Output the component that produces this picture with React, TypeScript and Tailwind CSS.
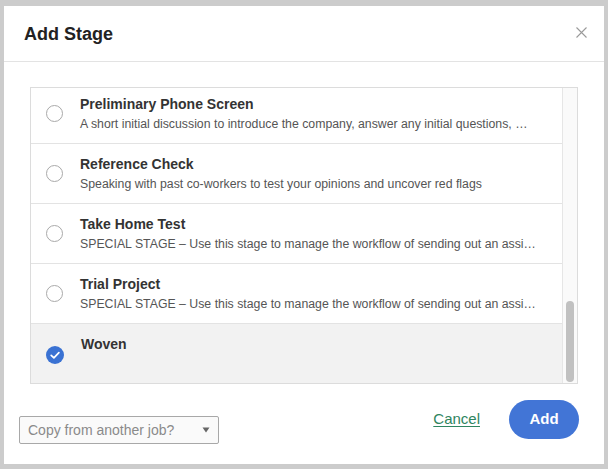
import React from "react";

const stages = [
  {
    title: "Preliminary Phone Screen",
    desc: "A short initial discussion to introduce the company, answer any initial questions, …",
  },
  {
    title: "Reference Check",
    desc: "Speaking with past co-workers to test your opinions and uncover red flags",
  },
  {
    title: "Take Home Test",
    desc: "SPECIAL STAGE – Use this stage to manage the workflow of sending out an assi…",
  },
  {
    title: "Trial Project",
    desc: "SPECIAL STAGE – Use this stage to manage the workflow of sending out an assi…",
  },
  { title: "Woven", desc: "", selected: true },
];

function Radio({ selected }: { selected?: boolean }) {
  if (selected) {
    return (
      <svg width="18" height="18" viewBox="0 0 18 18" className="shrink-0">
        <circle cx="9" cy="9" r="9" fill="#3a72d3" />
        <path d="M5.2 9.3 L7.9 11.8 L12.9 6.6" fill="none" stroke="#fff" strokeWidth="1.7" strokeLinecap="round" strokeLinejoin="round" />
      </svg>
    );
  }
  return <div className="w-[17px] h-[17px] shrink-0 rounded-full border border-[#a9a9a9] bg-white" />;
}

export default function App() {
  return (
    <div
      className="w-[608px] h-[469px] bg-[#cccccc] pt-[6px] pl-[4px] overflow-hidden"
      style={{ fontFamily: '"Liberation Sans", Arial, sans-serif' }}
    >
      <div className="w-[600px] h-[458px] bg-white flex flex-col">
        <div className="h-[56px] shrink-0 border-b border-[#e3e3e3] flex items-center justify-between pl-[20px] pr-[17px]">
          <h1 className="text-[18px] font-bold text-[#222] mt-[1px]">Add Stage</h1>
          <svg width="11" height="11" viewBox="0 0 11 11" className="mt-[-2px]">
            <path d="M0.5 0.5 L10.5 10.5 M10.5 0.5 L0.5 10.5" stroke="#9a9a9a" strokeWidth="1.1" />
          </svg>
        </div>
        <div className="pt-[25px] px-[26px]">
          <div className="h-[297px] border border-[#dcdcdc] flex overflow-hidden">
            <div className="flex-1 min-w-0 overflow-hidden">
              <div className="-mt-[4px]">
                {stages.map((s) => (
                  <div
                    key={s.title}
                    className={`h-[60px] flex items-center border-b border-[#e3e3e3] pl-[15px] ${
                      s.selected ? "bg-[#f2f2f2]" : "bg-white"
                    }`}
                  >
                    <div className={s.selected ? "mt-[3px]" : ""}>
                      <Radio selected={s.selected} />
                    </div>
                    <div className="ml-[17px] h-[60px] pt-[11px] min-w-0">
                      <div className="text-[14px] leading-[18px] font-bold text-[#333]">{s.title}</div>
                      <div className="mt-[3px] text-[12.3px] leading-[16px] text-[#555] whitespace-nowrap">
                        {s.desc}
                      </div>
                    </div>
                  </div>
                ))}
              </div>
            </div>
            <div className="w-[15px] shrink-0 bg-[#fafafa] border-l border-[#e6e6e6] flex flex-col justify-end items-center pb-[1px]">
              <div className="w-[8px] h-[81px] rounded-full bg-[#c1c1c1]" />
            </div>
          </div>
        </div>
        <div className="flex justify-between pl-[15px] pr-[25px]">
          <div className="mt-[32px] w-[200px] h-[28px] border border-[#a8a8a8] rounded-[2px] bg-[#fafafa] flex items-center justify-between pl-[8px] pr-[8px]">
            <span className="text-[14px] text-[#8a8a8a]">Copy from another job?</span>
            <svg width="8" height="6" viewBox="0 0 8 6">
              <path d="M0.5 0.5 L7.5 0.5 L4 5.5 Z" fill="#666" />
            </svg>
          </div>
          <div className="mt-[16px] flex items-center gap-[29px] h-[39px]">
            <a className="text-[15px] text-[#2f8560] underline underline-offset-2">Cancel</a>
            <button className="w-[70px] h-[39px] rounded-full bg-[#4275d6] text-white text-[15px] font-bold">
              Add
            </button>
          </div>
        </div>
      </div>
    </div>
  );
}
